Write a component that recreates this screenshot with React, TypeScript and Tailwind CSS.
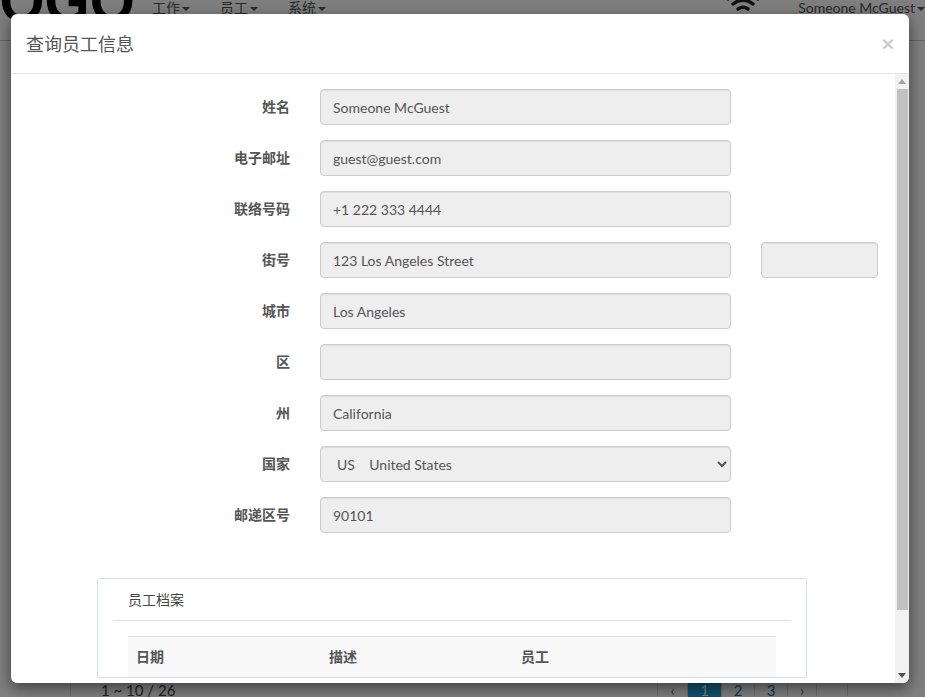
import React from "react";

const font = "font-['Lato','Noto_Sans_CJK_SC',sans-serif]";

const fieldClass =
  "h-9 rounded border border-[#ccc] bg-[#eee] px-3 text-sm text-[#555] shadow-[inset_0_1px_1px_rgba(0,0,0,0.075)] outline-none";

function Row({ label, children }: { label: string; children: React.ReactNode }) {
  return (
    <div className="mb-[15px] flex h-9 items-center">
      <label className="w-[279px] text-right text-sm font-bold text-[#555]">{label}</label>
      <div className="ml-[30px] flex gap-[30px]">{children}</div>
    </div>
  );
}

function Field({ label, value }: { label: string; value: string }) {
  return (
    <Row label={label}>
      <input readOnly value={value} className={`${fieldClass} w-[411px]`} />
    </Row>
  );
}

function Caret() {
  return <span className="ml-[2px] inline-block border-x-4 border-t-4 border-x-transparent border-t-current align-middle" />;
}

function Wifi() {
  return (
    <svg width="34" height="18" viewBox="0 0 34 18" fill="none" stroke="#222" strokeWidth="3.4" strokeLinecap="round">
      <path d="M2 3 C10 -4 24 -4 32 3" />
      <path d="M7 8 C13 3 21 3 27 8" />
      <path d="M12 13 C15 11 19 11 22 13" />
    </svg>
  );
}

function PageCell({ children, active, w }: { children?: React.ReactNode; active?: boolean; w: string }) {
  return (
    <div
      className={`${w} flex items-start justify-center border-l border-[#ddd] text-[15px] leading-[14px] ${
        active ? "bg-[#28a0de] text-white" : "text-[#2a79b0]"
      }`}
    >
      {children}
    </div>
  );
}

export default function App() {
  return (
    <div className={`${font} relative h-[697px] w-[925px] overflow-hidden bg-white text-sm text-[#444]`}>
      {/* page behind the dialog */}
      <div className="flex h-full flex-col">
        <header className="flex h-[41px] shrink-0 items-start overflow-hidden border-b border-[#ccc] bg-[#fff]">
          <div className="ml-[-36px] mt-[-31px] w-[188px] shrink-0 font-['Liberation_Sans',sans-serif] text-[58px] font-bold leading-[64px] text-black">
            LOGO
          </div>
          <nav className="flex text-sm leading-[16px] text-[#555]">
            <span className="w-[68px]">工作<Caret /></span>
            <span className="w-[68px]">员工<Caret /></span>
            <span>系统<Caret /></span>
          </nav>
          <div className="ml-auto flex">
            <div className="mt-[-4px]"><Wifi /></div>
            <span className="ml-[38px] whitespace-nowrap leading-[16px] text-[#555]">
              Someone McGuest<Caret />
            </span>
          </div>
        </header>
        <main className="ml-[70px] flex flex-1 flex-col justify-end border-l border-[#ddd]">
          <div className="flex h-[14px]">
            <div className="ml-[30px] text-[15px] leading-[14px] text-[#444]">1 ~ 10 / 26</div>
            <div className="ml-auto mr-[77px] flex border-r border-[#ddd]">
              <PageCell w="w-[30px]">‹</PageCell>
              <PageCell w="w-[34px]" active>1</PageCell>
              <PageCell w="w-[33px]">2</PageCell>
              <PageCell w="w-[33px]">3</PageCell>
              <PageCell w="w-[29px]">›</PageCell>
              <PageCell w="w-[31px]" />
            </div>
          </div>
        </main>
      </div>

      {/* backdrop */}
      <div className="absolute inset-0 bg-black/50" />

      {/* dialog */}
      <div className="absolute left-[11px] top-[14px] flex h-[669px] w-[898px] flex-col overflow-hidden rounded-md bg-white shadow-[0_5px_15px_rgba(0,0,0,0.5)]">
        <div className="flex h-[60px] shrink-0 items-center justify-between border-b border-[#e5e5e5] pl-[15px] pr-[15px]">
          <h4 className="text-lg text-[#555]">查询员工信息</h4>
          <span className="font-['Liberation_Sans',sans-serif] text-[21px] font-bold leading-none text-[#ccc]">×</span>
        </div>
        <div className="flex min-h-0 flex-1">
          <div className="min-w-0 flex-1 overflow-hidden pt-[15px]">
            <Field label="姓名" value="Someone McGuest" />
            <Field label="电子邮址" value="guest@guest.com" />
            <Field label="联络号码" value="+1 222 333 4444" />
            <Row label="街号">
              <input readOnly value="123 Los Angeles Street" className={`${fieldClass} w-[411px]`} />
              <input readOnly value="" className={`${fieldClass} w-[117px]`} />
            </Row>
            <Field label="城市" value="Los Angeles" />
            <Field label="区" value="" />
            <Field label="州" value="California" />
            <Row label="国家">
              <select defaultValue="US" className={`${fieldClass} w-[411px]`}>
                <option value="US">US&nbsp;&nbsp;&nbsp;&nbsp;United States</option>
              </select>
            </Row>
            <Field label="邮递区号" value="90101" />

            <section className="ml-[86px] mt-[45px] w-[710px] rounded-t border border-[#cfe0ea] px-[15px]">
              <div className="flex h-[42px] items-center border-b border-[#dde3e6] pl-[15px] text-sm text-[#444]">员工档案</div>
              <div className="mx-[15px] mt-[15px] grid h-[41px] grid-cols-[193px_192px_1fr] items-center border-t border-[#ddd] bg-[#f9f9f9] pl-2 text-sm font-bold text-[#555]">
                <span>日期</span>
                <span>描述</span>
                <span>员工</span>
              </div>
            </section>
          </div>

          {/* scrollbar */}
          <div className="flex w-[14px] shrink-0 flex-col items-center bg-[#f1f1f1]">
            <div className="flex h-[15px] items-center justify-center">
              <span className="border-x-[4px] border-b-[5px] border-x-transparent border-b-[#a3a3a3]" />
            </div>
            <div className="h-[521px] w-[11px] bg-[#c1c1c1]" />
            <div className="flex-1" />
            <div className="flex h-[15px] items-center justify-center">
              <span className="border-x-[4px] border-t-[5px] border-x-transparent border-t-[#505050]" />
            </div>
          </div>
        </div>
      </div>
    </div>
  );
}
